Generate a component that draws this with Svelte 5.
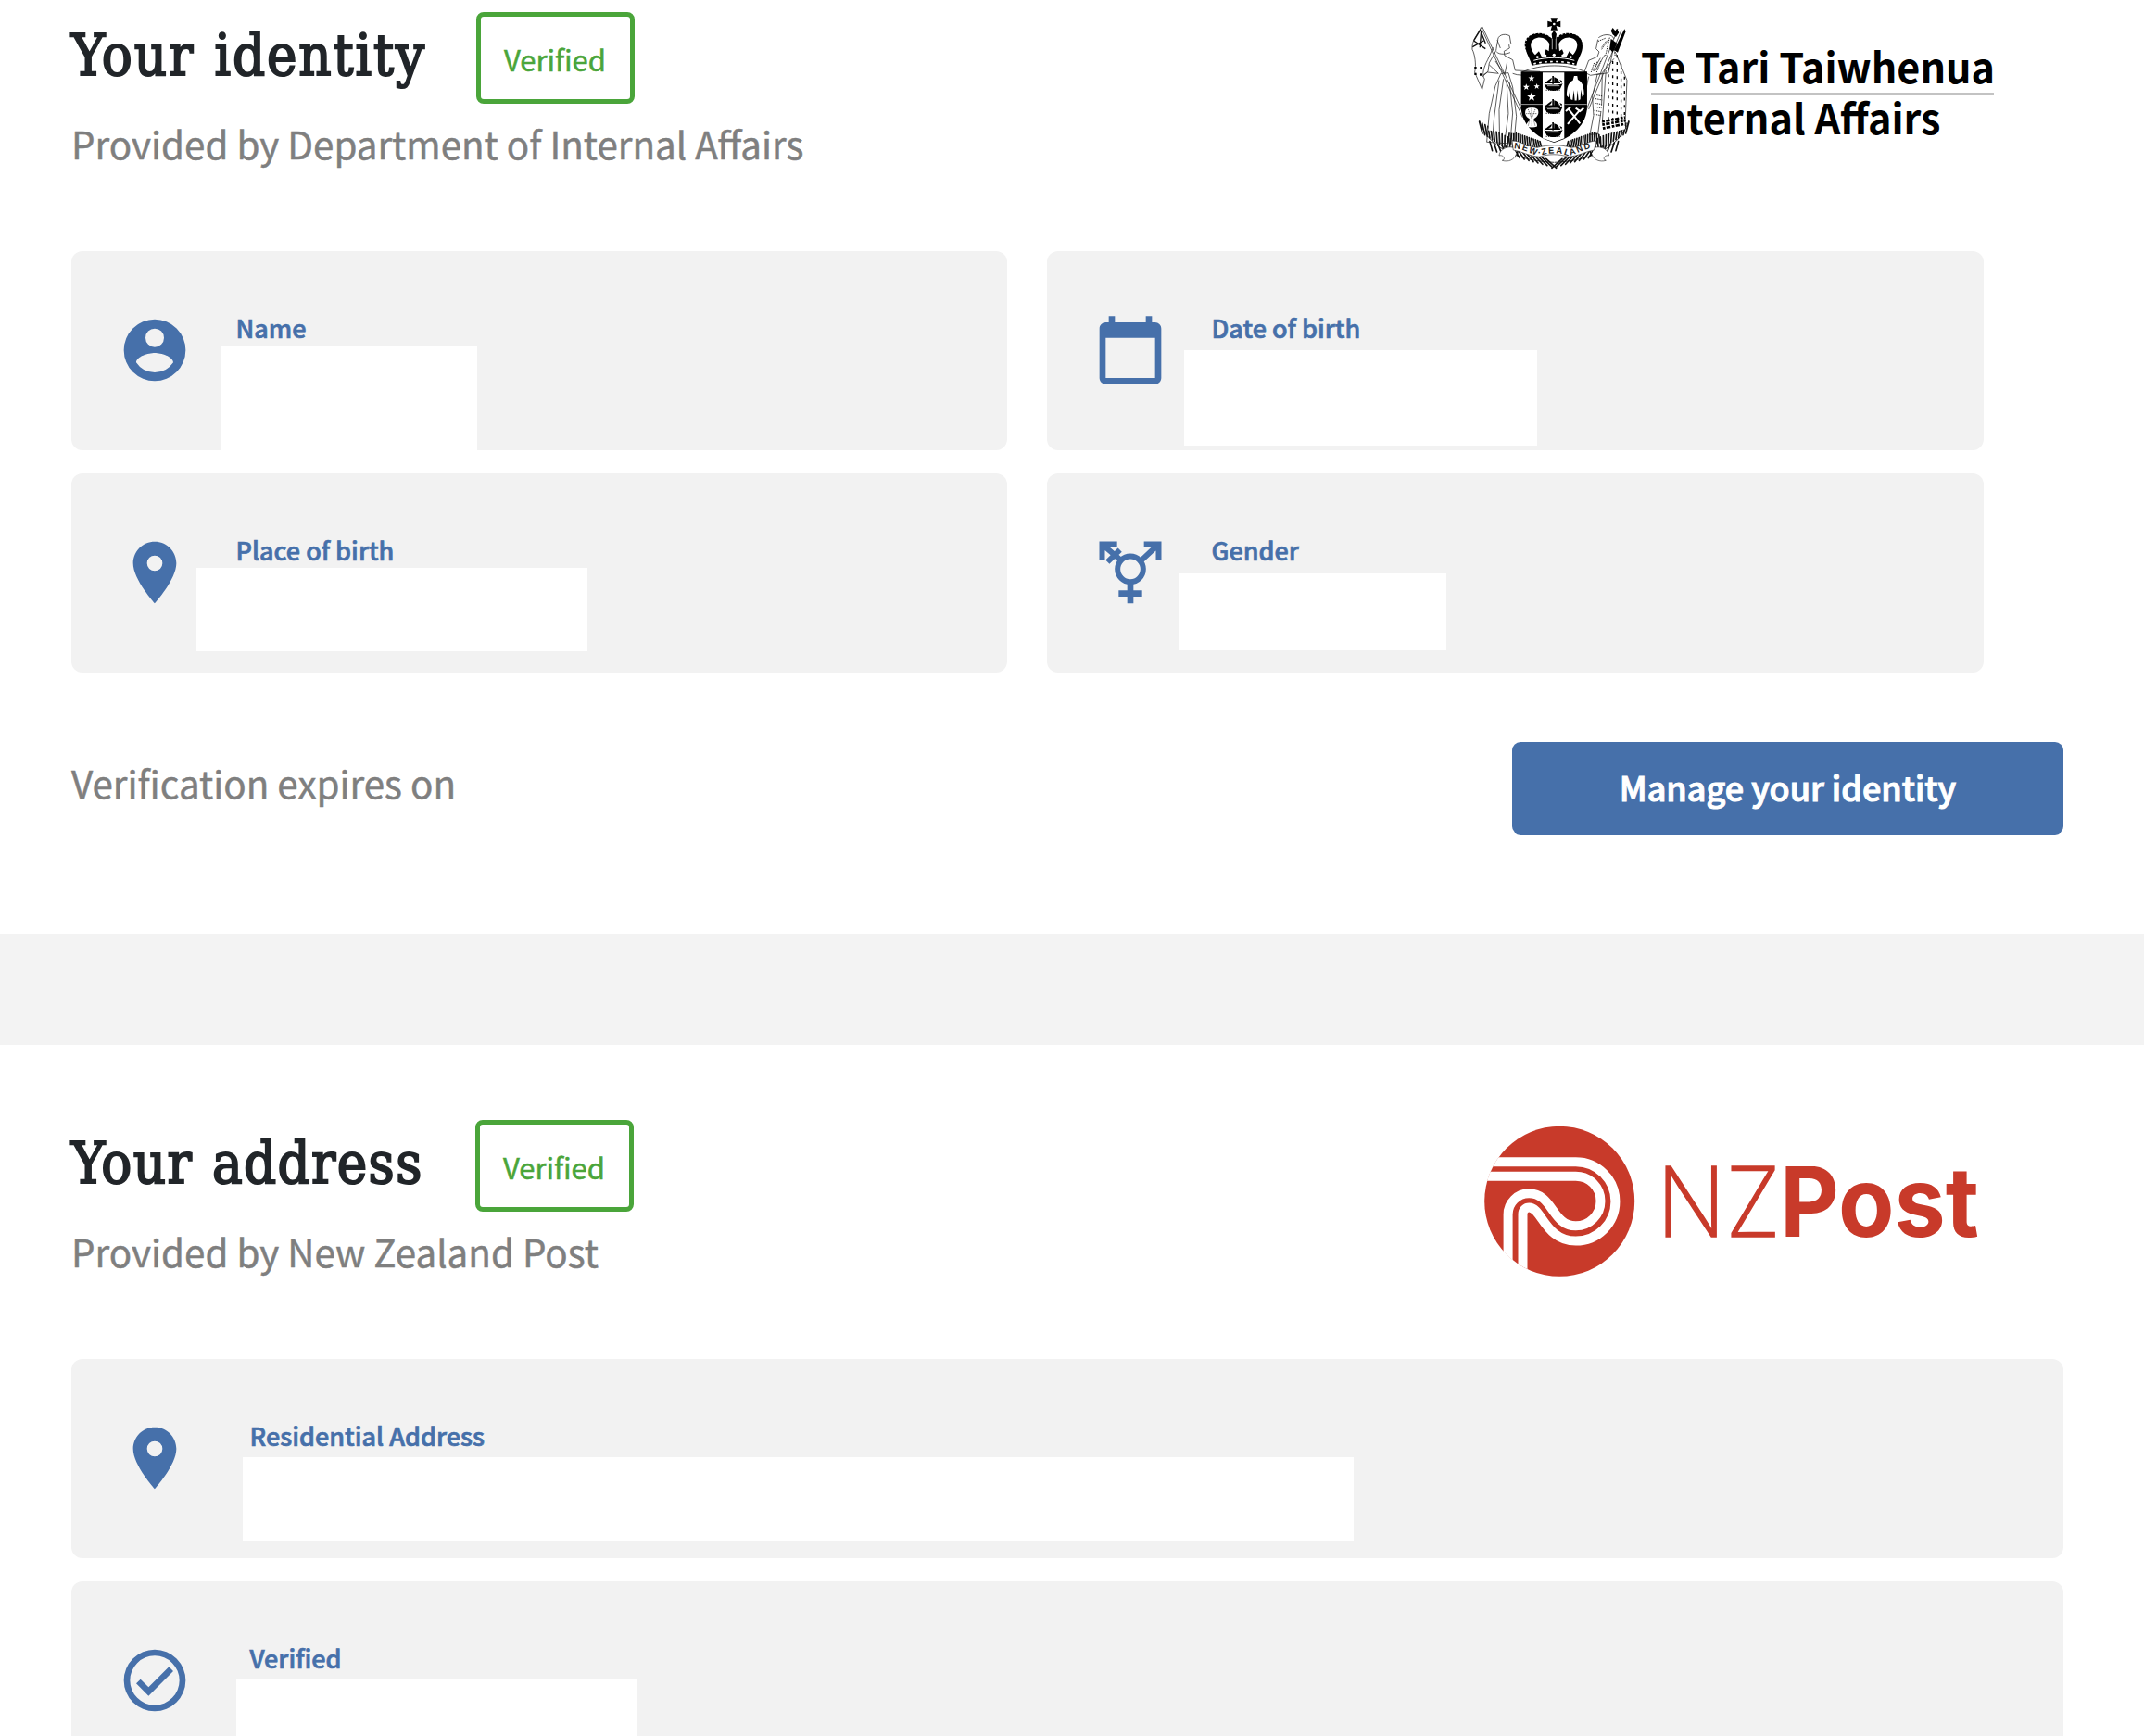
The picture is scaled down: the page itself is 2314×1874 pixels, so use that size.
<script>
  const identity = [
    { icon: 'account', label: 'Name', cls: 'name' },
    { icon: 'calendar', label: 'Date of birth', cls: 'dob' },
    { icon: 'place', label: 'Place of birth', cls: 'birthplace' },
    { icon: 'gender', label: 'Gender', cls: 'gender' },
  ];
  const address = [
    { icon: 'place', label: 'Residential Address', cls: 'residential' },
    { icon: 'check', label: 'Verified', cls: 'verified-on' },
  ];
  const ferns = Array.from({ length: 15 }, (_, i) => i);
</script>

{#snippet icon(name)}
  <svg class="icon" viewBox="0 0 24 24" aria-hidden="true">
    {#if name === 'account'}
      <path fill-rule="evenodd" d="M12 2a10 10 0 1 0 0 20 10 10 0 0 0 0-20zm0 3a3 3 0 1 1 0 6 3 3 0 0 1 0-6zm0 14.2A7.2 7.2 0 0 1 6 16c.03-2 4-3.1 6-3.1s5.97 1.1 6 3.1a7.2 7.2 0 0 1-6 3.2z" />
    {:else if name === 'calendar'}
      <path d="M20 3h-1V1h-2v2H7V1H5v2H4c-1.1 0-2 .9-2 2v16c0 1.1.9 2 2 2h16c1.1 0 2-.9 2-2V5c0-1.1-.9-2-2-2zm0 18H4V8h16v13z" />
    {:else if name === 'place'}
      <path d="M12 2C8.13 2 5 5.13 5 9c0 5.25 7 13 7 13s7-7.75 7-13c0-3.87-3.13-7-7-7zm0 9.5a2.5 2.5 0 0 1 0-5 2.5 2.5 0 0 1 0 5z" />
    {:else if name === 'gender'}
      <g fill="none" stroke="currentColor" stroke-width="1.8">
        <circle cx="12" cy="10.9" r="4.15" />
        <path d="M2.85 7.9V2.85H7.7M3 3l6.1 5.2M8.6 4.7 4.6 8.6M16.4 2.85h4.75V7.9M21 3l-6 5.6" />
        <path stroke-width="2" d="M12 15.4V22M8.2 18.8h7.6" />
      </g>
    {:else}
      <path d="M16.6 7.6 10 14.2l-2.6-2.6L6 13l4 4 8-8zM12 2a10 10 0 1 0 0 20 10 10 0 0 0 0-20zm0 18a8 8 0 1 1 0-16 8 8 0 0 1 0 16z" />
    {/if}
  </svg>
{/snippet}

{#snippet card(item)}
  <div class="card {item.cls}">
    {@render icon(item.icon)}
    <span class="label">{item.label}</span>
    <span class="value"></span>
  </div>
{/snippet}

<main>
  <section class="panel identity">
    <header>
      <div class="intro">
        <div class="title-row">
          <h2>Your identity</h2>
          <span class="badge">Verified</span>
        </div>
        <p>Provided by Department of Internal Affairs</p>
      </div>
      <svg class="dia" viewBox="0 0 580 180" role="img" aria-label="Te Tari Taiwhenua Internal Affairs">
        <g transform="translate(-.7 -.7) scale(.3333)">
          <!-- ferns -->
          <g fill="none" stroke="#111" stroke-width="5" stroke-linecap="round">
            <path d="M52 362c24 80 110 130 240 136M536 362c-24 80-110 130-240 136" stroke-width="2.5" />
            {#each ferns as i}
              <path d="M{62 + i * 8} {404 + i * 5}l{i * 1.2 - 10} -38" />
              <path d="M{526 - i * 8} {404 + i * 5}l{10 - i * 1.2} -38" />
              <path d="M{86 + i * 13} {430 + i * 4}l{8 + i * 1.8} 30" />
              <path d="M{502 - i * 13} {430 + i * 4}l{-8 - i * 1.8} 30" />
              <path d="M{150 + i * 7} {396 + i * 2.4}l{i - 4} 38" />
              <path d="M{438 - i * 7} {396 + i * 2.4}l{4 - i} 38" />
            {/each}
          </g>
          <!-- crown -->
          <path d="M283 30h22l-4 14 14-4v20l-14-4 4 14h-22l4-14-14 4V40l14 4z" />
          <circle cx="294" cy="50" r="4" fill="#fff" />
          <path d="M222 184C214 152 196 140 204 108c8-30 54-36 84-10l-2-16 8-12 8 12-2 16c30-26 76-20 84 10 8 32-10 44-18 76-42-10-102-10-144 0z" />
          <path fill="#fff" d="M233 150c-20-24-20-50 8-56 20-2 32 8 38 20l-2 24-9-6-5 12 6 8-14 6-10-20zM355 150c20-24 20-50-8-56-20-2-32 8-38 20l2 24 9-6 5 12-6 8 14 6 10-20z" />
          <path fill="none" stroke="#000" stroke-width="10" stroke-dasharray="8 3" d="M220 152c-26-30-22-64 24-68 22 0 38 12 48 30 10-18 26-30 48-30 46 4 50 38 24 68" />
          <path fill="none" stroke="#fff" stroke-width="3" d="M228 168c42-12 92-12 132 0" />
          <path fill="none" stroke="#fff" stroke-width="5" stroke-dasharray="8 10" d="M228 179c42-10 92-10 132 0" />
          <g fill="#fff"><circle cx="240" cy="157" r="4" /><circle cx="266" cy="152" r="4" /><circle cx="294" cy="150" r="5" /><circle cx="322" cy="152" r="4" /><circle cx="348" cy="157" r="4" /></g>
          <path fill="none" stroke="#fff" stroke-width="2" d="M288 98v34M300 98v34" />
          <path fill="none" stroke="#000" stroke-width="2" d="M190 206c60-28 150-28 208 0" />
          <!-- supporters -->
          <path fill="#fff" d="M110 210 80 394l88 10 8-90-28-104zM440 210l-40 180 50 20 74-20 4-200-30-40z" />
          <g fill="none" stroke="#222" stroke-width="2.2" stroke-linejoin="round">
            <path d="M57 60 192 352M61 58 194 338M57 62c-10 22-30 40-28 70 8 14 14 50 8 74l24 56 8-34c-10-14-2-40 10-62l18-40" />
            <path d="M150 88c-20-10-40 0-38 16-4 14-4 24-6 32l-22 40-4 28-14 10M150 88l4 24-6 6 2 10-18 10 2 14 26 14 8 34 80 4-8 16-66-6-14-4" />
            <path d="M108 140c10 10 30 8 44 2M104 170l30 44 8-40M122 210l-18 40-20 90-8 92 88 6 8-90-12-94-14-46zM116 232l-16 120-6 76M130 228l-14 100 2 104M140 230l6 110-12 92M150 240l10 98-8 96M84 182l30 28-36-4-18 16M110 102l10 26" />
            <path d="M438 94c20-14 44-12 50 4M436 100l-6 30 10 10-6 16-28 12-14 38 20 10 36-6 40-48M458 150l-30 50M444 160l-24 42M500 66 398 330M512 70 406 326M434 214l-16 70 4 62-12 62 26-2 10-74M406 220l-6 30M450 210l-2 104M462 200l-12 170M492 140l38 92-6 148M430 214l40-6 14-70" />
            <path stroke-width="3" stroke-dasharray="4 3" d="M424 176l-10 30M434 172l-10 30M446 170l-14 36M432 280l20 4M428 292l22 4M426 306l22 4M426 318l22 4M424 330l22 4M424 342l22 4M482 100l10 54M470 100l-22 32M460 96l-24 10M474 94l-14 60M462 106l-14 20" />
          </g>
          <path fill="none" stroke="#111" stroke-width="4" d="M56 68 34 104M58 72l-4 54M34 104l38 26M60 82l12 30M30 124l36-20" />
          <path d="M36 188h7v7h-7zM54 188h7v7h-7zM36 208h7v7h-7zM53 210h7v7h-7zM484 62l8 10 6-8 6 14-10 14-10-8-6-12zM522 66l4 8-26 68-12-8zM478 98l20 14-14 30-10-12z" />
          <path fill="none" stroke="#000" stroke-width="4" stroke-dasharray="9 14" d="M470 190v180M484 170v210M498 150v230M511 180v200M522 220v160" />
          <path fill="none" stroke="#000" stroke-width="8" stroke-dasharray="8 4 13 5" d="M450 366l74-14M450 376l76-14M452 388l68-14" />
          <!-- shield -->
          <path d="M187 204h214v112c0 60-50 104-107 118-57-14-107-58-107-118z" />
          <path fill="#fff" d="M257 207h70v213l-33 12-37-12z" />
          <path stroke="#999" stroke-width="3" d="M188 310h69M327 310h73" />
          {#each [218, 293, 368] as y}
            <g transform="translate(292 {y})">
              <path d="M-30 26c8 4 50 4 60-2l-8 18c-14 8-30 8-44 0zM-26 20h48v4h-48zM-4 0h5v26h-5zM2 4c12 4 18 10 16 18H2zM-6 6c2 8-6 14-20 16 6-6 10-10 20-16zM20 12l8 4-2 8z" />
              <path stroke="#fff" stroke-width="2" d="M-20 32h40" />
              <path stroke="#000" stroke-width="3" stroke-dasharray="3 4" d="M-24 46h48" />
            </g>
          {/each}
          <g fill="#fff">
            {#each [[221, 226, 11], [204, 254, 11], [238, 252, 10], [221, 286, 15]] as [x, y, r]}
              <path transform="translate({x} {y}) scale({r})" d="M0-1 .25-.32.95-.31.39.12.59.81 0 .4-.59.81-.39.12-.95-.31-.25-.32z" />
            {/each}
            <path d="M359 218h10l2 12c14 6 20 22 20 50l-6 6-4-24-2 32-6 4-3-34-3 34h-6l-3-34-4 32-6-2-3-30-4 24-6-6c0-28 6-44 20-50z" />
            <path d="M203 326c8-8 30-8 38 0 6 12 0 24-12 30l-1 6c10 6 12 12 11 20-10 4-24 4-34 0-1-8 2-14 10-20l-1-6c-12-6-17-18-11-30z" />
          </g>
          <path fill="none" stroke="#000" stroke-width="2" stroke-dasharray="3 3" d="M210 326l10 26M221 322v34M233 326l-10 26M214 364l-4 16M222 364v18M229 364l4 16M204 340h34" />
          <path fill="none" stroke="#fff" stroke-width="6" d="M340 324l38 48M378 328l-40 46M332 332l16-14M364 322l14 10 12-10" />
          <!-- ribbon -->
          <path fill="#fff" stroke="#333" stroke-width="2" d="M162 450c-20-6-44 6-46 26 16-4 22 14 10 16 20 6 40-2 46-22M426 450c20-6 44 6 46 26-16-4-22 14-10 16-20 6-40-2-46-22" />
          <path fill="#fff" stroke="#333" stroke-width="2" d="M158 428c30 0 46 20 82 22 34-10 76-10 110 0 34-2 50-20 80-22l-6 30c-28 4-50 20-84 22-30-10-64-10-94 0-34-2-56-18-84-22z" />
          <path id="ribbon" fill="none" d="M164 453c40 2 50 19 84 23 30-10 64-10 90 0 34-4 46-21 84-25" />
          <text class="motto"><textPath href="#ribbon" textLength="258">NEW·ZEALAND</textPath></text>
        </g>
        <text class="dia-text" x="191" y="80" textLength="382" lengthAdjust="spacingAndGlyphs">Te Tari Taiwhenua</text>
        <path d="M202 91.5h370" stroke="#c3c3c3" stroke-width="3" />
        <text class="dia-text" x="198.5" y="135" textLength="316" lengthAdjust="spacingAndGlyphs">Internal Affairs</text>
      </svg>
    </header>

    <div class="grid">
      {#each identity as item}{@render card(item)}{/each}
    </div>

    <footer>
      <p>Verification expires on</p>
      <button>Manage your identity</button>
    </footer>
  </section>

  <section class="panel address">
    <header>
      <div class="intro">
        <div class="title-row">
          <h2>Your address</h2>
          <span class="badge">Verified</span>
        </div>
        <p>Provided by New Zealand Post</p>
      </div>
      <svg class="post" viewBox="0 0 580 180" role="img" aria-label="NZ Post">
        <clipPath id="disc"><circle cx="103.2" cy="96.8" r="81.2" /></clipPath>
        <circle cx="103.2" cy="96.8" r="81" fill="#c83a2a" />
        <g clip-path="url(#disc)" fill="none" stroke="#fff" stroke-width="10">
          <path d="M0 54.2h120.7a42.7 42.7 0 0 1 0 85.4C88 139.6 84 103.5 70.4 103.5a6.9 6.9 0 0 0-6.9 6.9V200" />
          <path d="M0 69.7h120.7a26.8 26.8 0 0 1 0 53.6C95 123.3 96 88.3 70.2 88.3a22.6 22.6 0 0 0-22.6 22.6V200" />
        </g>
        <text class="nz" x="208" y="135" textLength="134" lengthAdjust="spacingAndGlyphs">NZ</text>
        <text class="po" x="341" y="135" textLength="215" lengthAdjust="spacingAndGlyphs">Post</text>
      </svg>
    </header>

    <div class="stack">
      {#each address as item}{@render card(item)}{/each}
    </div>
  </section>
</main>

<style>
  :global(body) {
    margin: 0;
    background: #fff;
  }
  main {
    height: 1874px;
    overflow: hidden;
    display: flex;
    flex-direction: column;
    gap: 120px;
    background: #f3f3f3;
    font-family: 'Noto Sans CJK SC', 'Noto Sans', sans-serif;
    color: #212529;
  }
  .panel {
    box-sizing: border-box;
    flex: none;
    background: #fff;
    padding: 0 87px 0 77px;
  }
  .identity { height: 1008px; }
  .address { height: 760px; padding-top: 68px; }
  header {
    display: flex;
    justify-content: space-between;
    height: 271px;
  }
  .intro { padding-top: 13px; }
  .title-row {
    display: flex;
    height: 99px;
  }
  h2 {
    margin: 0;
    width: 437px;
    font: 400 61px/94px 'DejaVu Serif Condensed', 'DejaVu Serif', serif;
    font-stretch: condensed;
    letter-spacing: 1.9px;
    word-spacing: 2px;
    -webkit-text-stroke: 2px currentColor;
    white-space: nowrap;
  }
  .address h2 {
    width: 436px;
    letter-spacing: 1.4px;
  }
  .badge {
    box-sizing: border-box;
    width: 171px;
    height: 99px;
    border: 5px solid #4aa53a;
    border-radius: 8px;
    color: #4aa53a;
    font-size: 31px;
    line-height: 92px;
    text-align: center;
    text-indent: -1px;
    -webkit-text-stroke: 0.5px currentColor;
  }
  p {
    margin: 0;
    color: #7f7f7f;
    font-size: 40.35px;
    line-height: 60px;
    white-space: nowrap;
    -webkit-text-stroke: 0.5px currentColor;
  }
  .intro p { padding-top: 13px; }
  .dia, .post {
    width: 580px;
    height: 180px;
    margin-right: 67px;
    flex: none;
    overflow: visible;
  }
  .dia { margin-top: 10px; }
  .post { margin-top: 4px; }
  .dia-text { font-weight: 700; font-size: 44.5px; fill: #000; }
  .motto { font: 700 28px 'Liberation Sans', sans-serif; fill: #222; }
  .nz { font: 200 105px Inter, sans-serif; fill: #c83a2a; stroke: #c83a2a; stroke-width: 1.6px; }
  .po { font: 700 105px Inter, sans-serif; fill: #c83a2a; }
  .grid {
    display: grid;
    grid-template-columns: 1010px 1011px;
    gap: 25px 43px;
  }
  .stack {
    display: grid;
    gap: 25px;
  }
  .card {
    box-sizing: border-box;
    position: relative;
    height: 215px;
    padding: 66.5px 50px;
    border-radius: 12px;
    background: #f2f2f2;
    display: flex;
    gap: 47.5px;
  }
  .stack .card { gap: 62.5px; }
  .icon {
    width: 80px;
    height: 80px;
    flex: none;
    fill: #4670aa;
    color: #4670aa;
  }
  .label {
    font-size: 27px;
    line-height: 32px;
    font-weight: 500;
    color: #4670aa;
    white-space: nowrap;
    -webkit-text-stroke: 0.7px currentColor;
  }
  /* blanked-out values overlay the card */
  .value {
    position: absolute;
    background: #fff;
  }
  .name .value { left: 162px; top: 102px; width: 276px; height: 113px; }
  .dob .value { left: 148px; top: 107px; width: 381px; height: 103px; }
  .birthplace .value { left: 135px; top: 102px; width: 422px; height: 90px; }
  .gender .value { left: 142px; top: 108px; width: 289px; height: 83px; }
  .residential .value { left: 185px; top: 106px; width: 1199px; height: 90px; }
  .verified-on .value { left: 178px; top: 105px; width: 433px; height: 110px; }
  footer {
    display: flex;
    justify-content: space-between;
    padding-top: 75px;
  }
  footer p { padding-top: 14px; }
  button {
    width: 595px;
    height: 100px;
    padding: 0 0 3px;
    border: 0;
    border-radius: 9px;
    background: #4670aa;
    color: #fff;
    font: 500 36px/97px 'Noto Sans CJK SC', 'Noto Sans', sans-serif;
    -webkit-text-stroke: 1.1px currentColor;
  }
</style>
